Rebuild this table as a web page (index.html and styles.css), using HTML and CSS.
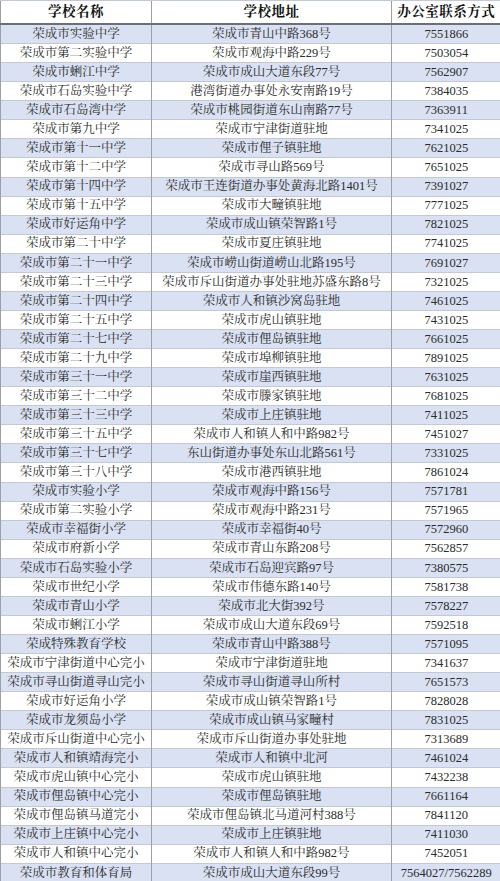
FILE: index.html
```html
<!DOCTYPE html>
<html lang="zh-CN">
<head>
<meta charset="utf-8">
<title>荣成市学校联系方式</title>
<link rel="stylesheet" href="styles.css">
</head>
<body>
<table class="sheet">
<colgroup><col class="c1"><col class="c2"><col class="c3"></colgroup>
<thead>
<tr class="head"><th>学校名称</th><th>学校地址</th><th>办公室联系方式</th></tr>
</thead>
<tbody>
<tr><td>荣成市实验中学</td><td>荣成市青山中路368号</td><td>7551866</td></tr>
<tr><td>荣成市第二实验中学</td><td>荣成市观海中路229号</td><td>7503054</td></tr>
<tr><td>荣成市蜊江中学</td><td>荣成市成山大道东段77号</td><td>7562907</td></tr>
<tr><td>荣成市石岛实验中学</td><td>港湾街道办事处永安南路19号</td><td>7384035</td></tr>
<tr><td>荣成市石岛湾中学</td><td>荣成市桃园街道东山南路77号</td><td>7363911</td></tr>
<tr><td>荣成市第九中学</td><td>荣成市宁津街道驻地</td><td>7341025</td></tr>
<tr><td>荣成市第十一中学</td><td>荣成市俚子镇驻地</td><td>7621025</td></tr>
<tr><td>荣成市第十二中学</td><td>荣成市寻山路569号</td><td>7651025</td></tr>
<tr><td>荣成市第十四中学</td><td>荣成市王连街道办事处黄海北路1401号</td><td>7391027</td></tr>
<tr><td>荣成市第十五中学</td><td>荣成市大疃镇驻地</td><td>7771025</td></tr>
<tr><td>荣成市好运角中学</td><td>荣成市成山镇荣智路1号</td><td>7821025</td></tr>
<tr><td>荣成市第二十中学</td><td>荣成市夏庄镇驻地</td><td>7741025</td></tr>
<tr><td>荣成市第二十一中学</td><td>荣成市崂山街道崂山北路195号</td><td>7691027</td></tr>
<tr><td>荣成市第二十三中学</td><td>荣成市斥山街道办事处驻地苏盛东路8号</td><td>7321025</td></tr>
<tr><td>荣成市第二十四中学</td><td>荣成市人和镇沙窝岛驻地</td><td>7461025</td></tr>
<tr><td>荣成市第二十五中学</td><td>荣成市虎山镇驻地</td><td>7431025</td></tr>
<tr><td>荣成市第二十七中学</td><td>荣成市俚岛镇驻地</td><td>7661025</td></tr>
<tr><td>荣成市第二十九中学</td><td>荣成市埠柳镇驻地</td><td>7891025</td></tr>
<tr><td>荣成市第三十一中学</td><td>荣成市崖西镇驻地</td><td>7631025</td></tr>
<tr><td>荣成市第三十二中学</td><td>荣成市滕家镇驻地</td><td>7681025</td></tr>
<tr><td>荣成市第三十三中学</td><td>荣成市上庄镇驻地</td><td>7411025</td></tr>
<tr><td>荣成市第三十五中学</td><td>荣成市人和镇人和中路982号</td><td>7451027</td></tr>
<tr><td>荣成市第三十七中学</td><td>东山街道办事处东山北路561号</td><td>7331025</td></tr>
<tr><td>荣成市第三十八中学</td><td>荣成市港西镇驻地</td><td>7861024</td></tr>
<tr><td>荣成市实验小学</td><td>荣成市观海中路156号</td><td>7571781</td></tr>
<tr><td>荣成市第二实验小学</td><td>荣成市观海中路231号</td><td>7571965</td></tr>
<tr><td>荣成市幸福街小学</td><td>荣成市幸福街40号</td><td>7572960</td></tr>
<tr><td>荣成市府新小学</td><td>荣成市青山东路208号</td><td>7562857</td></tr>
<tr><td>荣成市石岛实验小学</td><td>荣成市石岛迎宾路97号</td><td>7380575</td></tr>
<tr><td>荣成市世纪小学</td><td>荣成市伟德东路140号</td><td>7581738</td></tr>
<tr><td>荣成市青山小学</td><td>荣成市北大街392号</td><td>7578227</td></tr>
<tr><td>荣成市蜊江小学</td><td>荣成市成山大道东段69号</td><td>7592518</td></tr>
<tr><td>荣成特殊教育学校</td><td>荣成市青山中路388号</td><td>7571095</td></tr>
<tr><td>荣成市宁津街道中心完小</td><td>荣成市宁津街道驻地</td><td>7341637</td></tr>
<tr><td>荣成市寻山街道寻山完小</td><td>荣成市寻山街道寻山所村</td><td>7651573</td></tr>
<tr><td>荣成市好运角小学</td><td>荣成市成山镇荣智路1号</td><td>7828028</td></tr>
<tr><td>荣成市龙须岛小学</td><td>荣成市成山镇马家疃村</td><td>7831025</td></tr>
<tr><td>荣成市斥山街道中心完小</td><td>荣成市斥山街道办事处驻地</td><td>7313689</td></tr>
<tr><td>荣成市人和镇靖海完小</td><td>荣成市人和镇中北河</td><td>7461024</td></tr>
<tr><td>荣成市虎山镇中心完小</td><td>荣成市虎山镇驻地</td><td>7432238</td></tr>
<tr><td>荣成市俚岛镇中心完小</td><td>荣成市俚岛镇驻地</td><td>7661164</td></tr>
<tr><td>荣成市俚岛镇马道完小</td><td>荣成市俚岛镇北马道河村388号</td><td>7841120</td></tr>
<tr><td>荣成市上庄镇中心完小</td><td>荣成市上庄镇驻地</td><td>7411030</td></tr>
<tr><td>荣成市人和镇中心完小</td><td>荣成市人和镇人和中路982号</td><td>7452051</td></tr>
<tr><td>荣成市教育和体育局</td><td>荣成市成山大道东段99号</td><td>7564027/7562289</td></tr>
</tbody>
</table>
</body>
</html>
```

FILE: styles.css
```css
html, body {
  margin: 0;
  padding: 0;
  background: #ffffff;
}

.sheet {
  width: 500px;
  table-layout: fixed;
  border-collapse: collapse;
  font-family: "Liberation Serif", "Noto Serif CJK SC", "Noto Sans CJK SC", serif;
  color: #2b2b2b;
  font-size: 12.5px;
}

.c1 { width: 151px; }
.c2 { width: 240px; }
.c3 { width: 109px; }

.sheet th,
.sheet td {
  padding: 0;
  text-align: center;
  white-space: nowrap;
  overflow: hidden;
  border-left: 1px solid #9a9fa8;
  border-top: 1px solid #c4c8d0;
  line-height: 1;
}

.sheet tr > :last-child {
  border-right: none;
}

.head th {
  height: 22px;
  font-size: 13.5px;
  font-weight: bold;
  color: #111111;
  letter-spacing: 0.5px;
  border-bottom: 2px solid #6b6f76;
  border-top: 1px solid #c4c8d0;
}

.sheet tbody td {
  height: 18.07px;
}

.sheet tbody tr:nth-child(odd) {
  background: #d9e1f2;
}

.sheet tbody tr:nth-child(even) {
  background: #ffffff;
}
```
